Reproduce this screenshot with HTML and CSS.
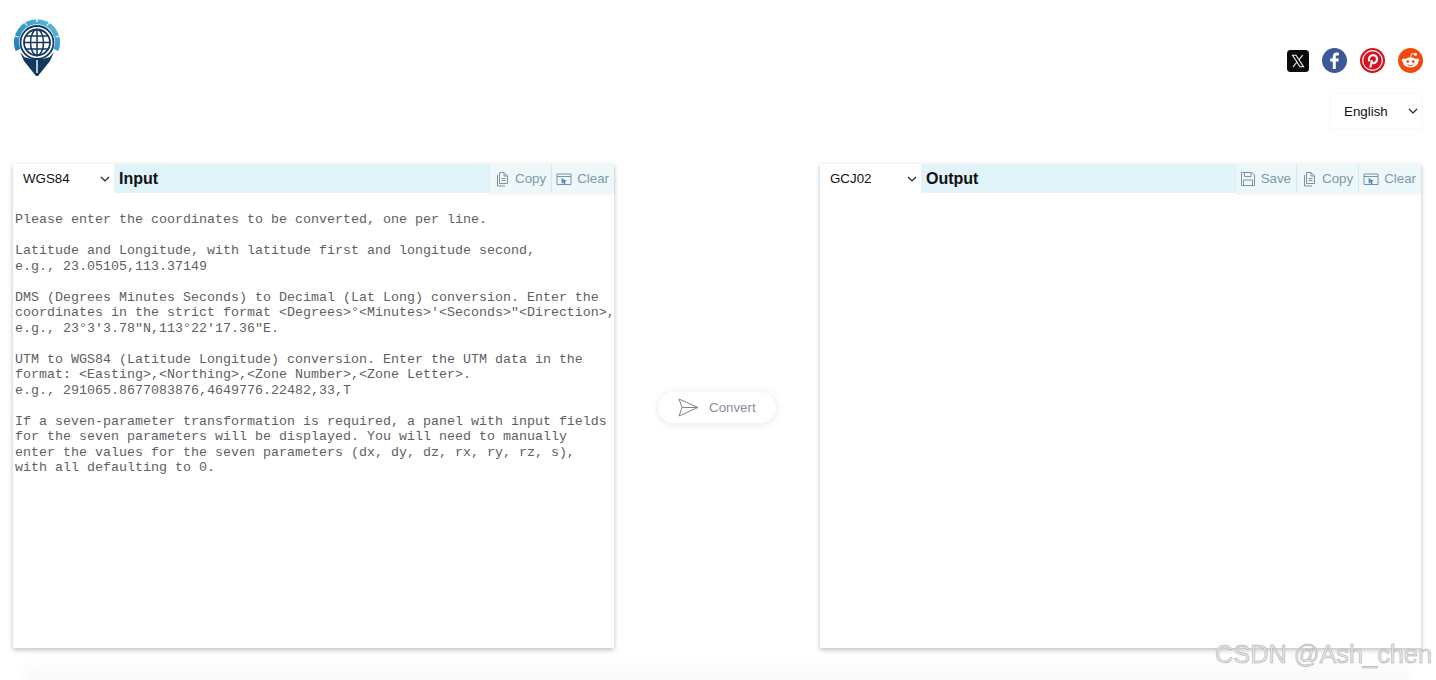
FILE: index.html
```html
<!DOCTYPE html>
<html>
<head>
<title>Coordinate Converter</title>
<link rel="stylesheet" href="styles.css">
</head>
<body>
<header class="top-bar">
    <svg class="logo" viewBox="0 0 46 58" width="46" height="58">
        <defs>
            <linearGradient id="ring" x1="1" y1="0" x2="0" y2="1">
                <stop offset="0" stop-color="#5dbbe0"/>
                <stop offset="1" stop-color="#1d7fb5"/>
            </linearGradient>
        </defs>
        <path d="M4 31A20.5 20.5 0 1 1 42 31" fill="none" stroke="url(#ring)" stroke-width="5"/>
        <path d="M4 30L10 38L23 57L36 38L42 30L36 38L25 41V52L23 56L21 52V41L10 38Z" fill="#12385f"/>
        <path d="M6 33L12 40H34L40 33L36 42L24 57L22 57L10 42Z" fill="#12385f"/>
        <path d="M23 41V54" stroke="#fff" stroke-width="1.4"/>
        <circle cx="23" cy="23.5" r="16.5" fill="#fff" stroke="#12385f" stroke-width="1.8"/>
        <circle cx="23" cy="23.5" r="13" fill="#fff" stroke="#12385f" stroke-width="1.8"/>
        <ellipse cx="23" cy="23.5" rx="6.5" ry="13" fill="none" stroke="#12385f" stroke-width="1.5"/>
        <path d="M23 10.5V36.5M10 23.5H36M12 17H34M12 30H34" fill="none" stroke="#12385f" stroke-width="1.5"/>
        <path d="M10 2.5L13 6.5M36 2.5L33 6.5M23 0V3M1 17L4.5 18M45 17L41.5 18" stroke="#fff" stroke-width="1.2"/>
    </svg>
    <div class="top-right">
        <div class="social">
            <svg viewBox="0 0 22 22" width="22" height="22">
                <rect width="22" height="22" rx="3.5" fill="#0b0b0b"/>
                <path d="M5.5 5.2H9L16.5 16.8H13L5.5 5.2ZM15.8 5.2L11.8 9.8M10 12L6 16.8" fill="none" stroke="#f2f2f2" stroke-width="1.1"/>
            </svg>
            <svg viewBox="0 0 25 25" width="25" height="25">
                <circle cx="12.5" cy="12.5" r="12.5" fill="#3b5998"/>
                <path d="M13.8 21V13.6H16.4L16.8 10.6H13.8V8.9C13.8 8 14.1 7.5 15.3 7.5H16.9V4.8C16.4 4.7 15.6 4.6 14.7 4.6C12.4 4.6 10.8 6 10.8 8.5V10.6H8.2V13.6H10.8V21Z" fill="#fff"/>
            </svg>
            <svg viewBox="0 0 25 25" width="25" height="25">
                <circle cx="12.5" cy="12.5" r="12.5" fill="#d9101f"/>
                <circle cx="12.5" cy="12.5" r="9.8" fill="none" stroke="#fff" stroke-width="1.2"/>
                <path d="M10.3 19.5L12 12.3M9.3 13.4C8 10.4 10 7.2 13 7.2C15.8 7.2 17.3 9 17 11.3C16.7 13.8 15 15.3 13.4 15.1C12.4 15 11.8 14.4 11.6 13.7" fill="none" stroke="#fff" stroke-width="2.2"/>
            </svg>
            <svg viewBox="0 0 25 25" width="25" height="25">
                <circle cx="12.5" cy="12.5" r="12.5" fill="#f2490f"/>
                <ellipse cx="12.5" cy="14.5" rx="7.5" ry="5" fill="#fff"/>
                <circle cx="5.6" cy="12.2" r="1.7" fill="#fff"/>
                <circle cx="19.4" cy="12.2" r="1.7" fill="#fff"/>
                <circle cx="17.5" cy="6.3" r="1.5" fill="#fff"/>
                <path d="M12.7 9.5L13.6 5.6L17 6.3" fill="none" stroke="#fff" stroke-width=".9"/>
                <circle cx="9.8" cy="13.6" r="1.4" fill="#f2490f"/>
                <circle cx="15.2" cy="13.6" r="1.4" fill="#f2490f"/>
                <path d="M9.6 16.6C11 17.9 14 17.9 15.4 16.6" fill="none" stroke="#f2490f" stroke-width="1"/>
            </svg>
        </div>
        <div class="lang-select">
            <span>English</span>
            <svg class="chevron" viewBox="0 0 10 6" width="10" height="6"><path d="M1 1L5 5L9 1" fill="none" stroke="#222" stroke-width="1.2"/></svg>
        </div>
    </div>
</header>

<main class="converter">
    <section class="panel">
        <div class="panel-head">
            <div class="crs-select">
                <span>WGS84</span>
                <svg class="chevron" viewBox="0 0 10 6" width="10" height="6"><path d="M1 1L5 5L9 1" fill="none" stroke="#222" stroke-width="1.2"/></svg>
            </div>
            <h2 class="panel-title">Input</h2>
            <div class="tools">
                <button class="tool">
                    <svg viewBox="0 0 16 16" width="16" height="16"><path d="M5.5 1.5H10L13.5 5V12.5H5.5ZM10 1.5V5H13.5M3.5 4V15H11M7.5 7.5H11.5M7.5 9.5H11.5" fill="none" stroke="#7f929c" stroke-width="1"/></svg>
                    Copy
                </button>
                <button class="tool">
                    <svg viewBox="0 0 16 16" width="16" height="16"><path d="M1 3H15V13.5H1ZM1 5.5H15" fill="none" stroke="#7f929c" stroke-width="1"/><path d="M5.5 7L11 10L8.8 10.8L10 13.5L8.5 14L7.3 11.6L5.8 13Z" fill="#4d8fc0"/></svg>
                    Clear
                </button>
            </div>
        </div>
        <div class="coord-text">Please enter the coordinates to be converted, one per line.

Latitude and Longitude, with latitude first and longitude second,
e.g., 23.05105,113.37149

DMS (Degrees Minutes Seconds) to Decimal (Lat Long) conversion. Enter the
coordinates in the strict format &lt;Degrees&gt;°&lt;Minutes&gt;'&lt;Seconds&gt;"&lt;Direction&gt;,
e.g., 23°3'3.78"N,113°22'17.36"E.

UTM to WGS84 (Latitude Longitude) conversion. Enter the UTM data in the
format: &lt;Easting&gt;,&lt;Northing&gt;,&lt;Zone Number&gt;,&lt;Zone Letter&gt;.
e.g., 291065.8677083876,4649776.22482,33,T

If a seven-parameter transformation is required, a panel with input fields
for the seven parameters will be displayed. You will need to manually
enter the values for the seven parameters (dx, dy, dz, rx, ry, rz, s),
with all defaulting to 0.</div>
    </section>

    <button class="convert-btn">
        <svg viewBox="0 0 21 19" width="21" height="19"><path d="M1 1L20 9.5L1 18L4 9.5ZM4 9.5H20" fill="none" stroke="#80868c" stroke-width="1"/></svg>
        Convert
    </button>

    <section class="panel">
        <div class="panel-head">
            <div class="crs-select">
                <span>GCJ02</span>
                <svg class="chevron" viewBox="0 0 10 6" width="10" height="6"><path d="M1 1L5 5L9 1" fill="none" stroke="#222" stroke-width="1.2"/></svg>
            </div>
            <h2 class="panel-title">Output</h2>
            <div class="tools">
                <button class="tool">
                    <svg viewBox="0 0 16 16" width="16" height="16"><path d="M1.5 1.5H12L14.5 4V14.5H1.5ZM4.5 1.5V5.5H11V1.5M3.5 14.5V9H12.5V14.5" fill="none" stroke="#7f929c" stroke-width="1"/></svg>
                    Save
                </button>
                <button class="tool">
                    <svg viewBox="0 0 16 16" width="16" height="16"><path d="M5.5 1.5H10L13.5 5V12.5H5.5ZM10 1.5V5H13.5M3.5 4V15H11M7.5 7.5H11.5M7.5 9.5H11.5" fill="none" stroke="#7f929c" stroke-width="1"/></svg>
                    Copy
                </button>
                <button class="tool">
                    <svg viewBox="0 0 16 16" width="16" height="16"><path d="M1 3H15V13.5H1ZM1 5.5H15" fill="none" stroke="#7f929c" stroke-width="1"/><path d="M5.5 7L11 10L8.8 10.8L10 13.5L8.5 14L7.3 11.6L5.8 13Z" fill="#4d8fc0"/></svg>
                    Clear
                </button>
            </div>
        </div>
    </section>
</main>

<footer class="page-foot"></footer>
<div class="watermark">CSDN @Ash_chen</div>
</body>
</html>
```

FILE: styles.css
```css
html, body {
    margin: 0;
    height: 680px;
    overflow: hidden;
    background: #fff;
    font-family: "Liberation Sans", Arial, sans-serif;
}

.top-bar {
    display: flex;
    justify-content: space-between;
    align-items: flex-start;
    height: 145px;
    padding: 19px 15px 0 14px;
    box-sizing: border-box;
}

.logo {
    display: block;
}

.top-right {
    display: flex;
    flex-direction: column;
    align-items: flex-end;
    padding-top: 29px;
    gap: 21px;
}

.social {
    display: flex;
    align-items: center;
    gap: 13px;
    height: 25px;
    margin-right: -2px;
}

.social svg {
    display: block;
}

.lang-select {
    display: flex;
    align-items: center;
    justify-content: space-between;
    width: 90px;
    height: 34px;
    padding: 0 3px 0 13px;
    box-sizing: border-box;
    font-size: 13.33px;
    color: #111;
    box-shadow: 0 0 3px rgba(0, 0, 0, .06);
}

.converter {
    display: flex;
    justify-content: space-between;
    align-items: center;
    padding: 19px 15px 0 13px;
}

.panel {
    width: 601px;
    height: 484px;
    background: #fff;
    box-shadow: 0 2px 5px rgba(0, 0, 0, .26);
}

.panel-head {
    display: flex;
    align-items: stretch;
    height: 29px;
    background: #e0f4fa;
}

.crs-select {
    display: flex;
    align-items: center;
    justify-content: space-between;
    width: 101px;
    padding: 0 4px 0 10px;
    box-sizing: border-box;
    background: #fff;
    font-size: 13.33px;
    color: #111;
}

.panel-title {
    margin: 0 0 0 5px;
    font-size: 16px;
    line-height: 29px;
    font-weight: bold;
    color: #111;
}

.tools {
    display: flex;
    margin-left: auto;
    gap: 1px;
}

.tool {
    display: flex;
    align-items: center;
    gap: 5px;
    margin: 0;
    padding: 0 5px 0 4px;
    border: 0;
    background: #edf8fb;
    box-shadow: 0 1px 2px rgba(0, 0, 0, .08);
    font-family: inherit;
    font-size: 13.33px;
    color: #7f98a5;
}

.coord-text {
    padding: 19px 2px 0;
    font-family: "Liberation Mono", "Courier New", monospace;
    font-size: 13.33px;
    line-height: 15.5px;
    color: #5f5f5f;
    white-space: pre;
}

.convert-btn {
    display: flex;
    align-items: center;
    gap: 10px;
    width: 118px;
    height: 31px;
    margin-top: 3px;
    padding: 0 0 0 20px;
    border: 0;
    border-radius: 16px;
    background: #fff;
    box-shadow: 0 1px 8px rgba(0, 0, 0, .1);
    font-family: inherit;
    font-size: 13.33px;
    color: #8a9099;
}

.page-foot {
    height: 40px;
    margin: 12px 25px 0;
    background: linear-gradient(#fdfdfd, #f5f5f5);
    filter: blur(5px);
}

.watermark {
    position: absolute;
    right: 4px;
    top: 638px;
    font-size: 25.3px;
    line-height: 32px;
    color: #e6e6e6;
    -webkit-text-stroke: .5px #a8a8a8;
    white-space: nowrap;
}
```
